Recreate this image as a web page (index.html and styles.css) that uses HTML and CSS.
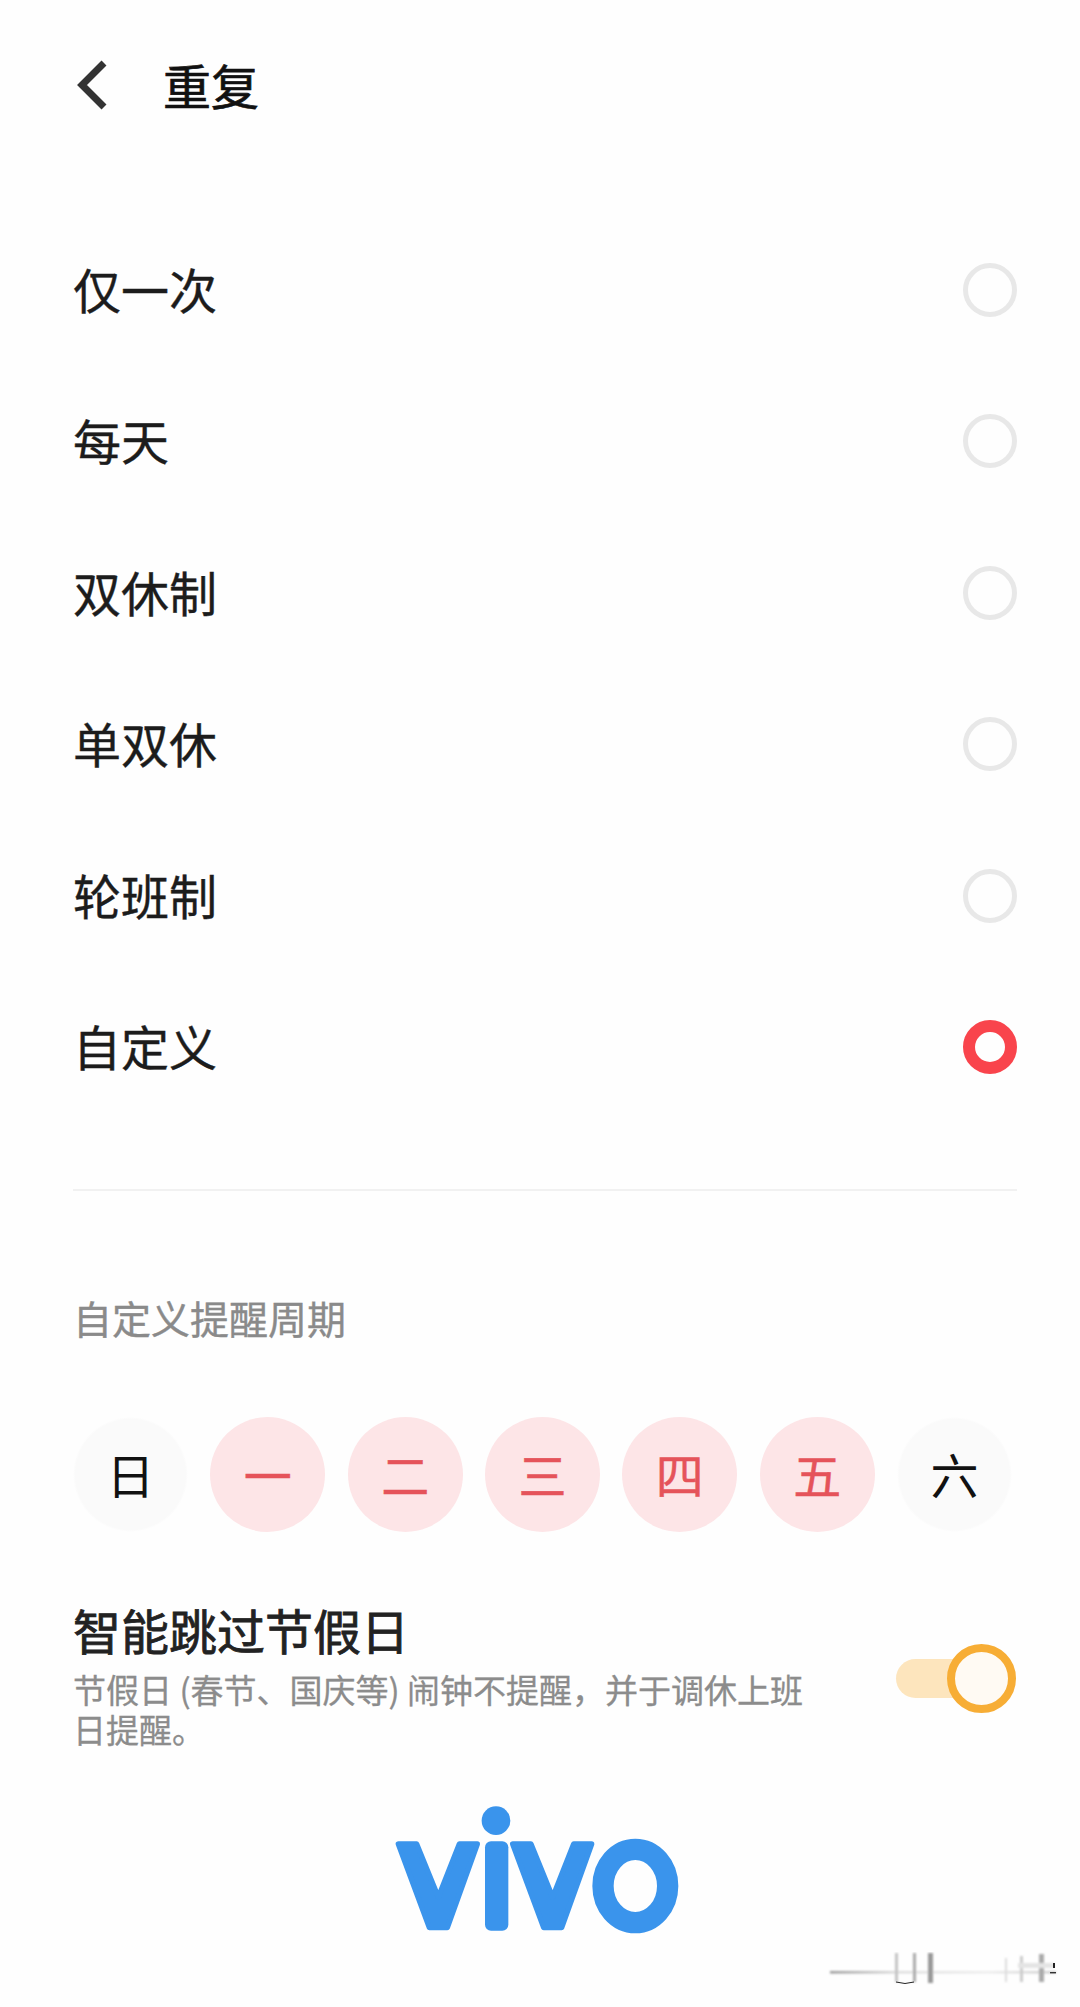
FILE: index.html
```html
<!DOCTYPE html>
<html lang="zh-CN">
  <head>
    <meta charset="UTF-8">
    <meta name="viewport" content="width=device-width, initial-scale=1" />
    <title>重复</title>
    <link rel="stylesheet" href="styles.css">
  </head>
  <body>
    <div class="page">
      <header class="header">
        <svg class="back" viewBox="0 0 32 50" aria-hidden="true">
          <polyline points="28,3 6,25 28,47" />
        </svg>
        <h1 class="title">重复</h1>
      </header>

      <ul class="options">
        <li class="option"><span class="option-name">仅一次</span><i class="radio"></i></li>
        <li class="option"><span class="option-name">每天</span><i class="radio"></i></li>
        <li class="option"><span class="option-name">双休制</span><i class="radio"></i></li>
        <li class="option"><span class="option-name">单双休</span><i class="radio"></i></li>
        <li class="option"><span class="option-name">轮班制</span><i class="radio"></i></li>
        <li class="option"><span class="option-name">自定义</span><i class="radio radio-on"></i></li>
      </ul>

      <div class="divider"></div>

      <div class="section-label">自定义提醒周期</div>

      <div class="days">
        <div class="day">日</div>
        <div class="day day-on">一</div>
        <div class="day day-on">二</div>
        <div class="day day-on">三</div>
        <div class="day day-on">四</div>
        <div class="day day-on">五</div>
        <div class="day">六</div>
      </div>

      <div class="holiday">
        <div class="holiday-text">
          <div class="holiday-title">智能跳过节假日</div>
          <div class="holiday-desc">节假日 (春节、国庆等) 闹钟不提醒&#65292;并于调休上班日提醒。</div>
        </div>
        <div class="switch"><div class="switch-knob"></div></div>
      </div>

      <svg class="logo" viewBox="0 0 990 510" role="img" aria-label="vivo">
        <circle cx="378" cy="122" r="43" />
        <polygon class="logo-v" points="85,192 140,192 205,352 268,192 322,192 232,443 178,443" />
        <rect x="345" y="184" width="70" height="268" rx="18" />
        <polygon class="logo-v" points="428,192 483,192 548,352 611,192 665,192 575,443 521,443" />
        <ellipse class="logo-o" cx="796" cy="318" rx="97" ry="110" />
      </svg>

      <svg class="smudge" viewBox="0 0 240 40" aria-hidden="true">
        <defs>
          <filter id="soft"><feGaussianBlur stdDeviation="1.3" /></filter>
          <linearGradient id="fadeLine" x1="0" x2="1" y1="0" y2="0">
            <stop offset="0" stop-color="#999" />
            <stop offset="0.3" stop-color="#ddd" />
            <stop offset="0.7" stop-color="#eee" />
            <stop offset="1" stop-color="#ccc" />
          </linearGradient>
        </defs>
        <g filter="url(#soft)">
          <rect x="2" y="19" width="226" height="2.5" fill="url(#fadeLine)" />
          <rect x="67" y="1" width="3" height="29" fill="#c4c4c4" />
          <rect x="85" y="1" width="3" height="29" fill="#aaa" />
          <rect x="100" y="1" width="5" height="30" fill="#999" />
          <rect x="177" y="6" width="2" height="24" fill="#ddd" />
          <rect x="192" y="4" width="3" height="26" fill="#ccc" />
          <rect x="211" y="2" width="5" height="28" fill="#aaa" />
          <rect x="190" y="11" width="36" height="5" fill="#e4e4e4" />
        </g>
        <path d="M68 30q9 3 18 0" fill="none" stroke="#222" stroke-width="1" />
        <rect x="225" y="11" width="2" height="5" fill="#222" />
        <rect x="222" y="20" width="6" height="1.4" fill="#333" />
      </svg>
    </div>
  </body>
</html>
```

FILE: styles.css
```css
* { box-sizing: border-box; }
body {
  margin: 0;
  overflow: hidden;
  background: #fefefe;
  font-family: "Noto Sans CJK SC", "Noto Sans", sans-serif;
  color: #1c1c1c;
}
.page {
  position: relative;
  width: 1080px;
  height: 2007px;
  padding: 0 63px 0 73px;
  overflow: hidden;
}
.header {
  display: flex;
  align-items: center;
  height: 170px;
  margin-bottom: 44px;
}
.back {
  width: 32px;
  height: 50px;
  margin: 0 0 0 3px;
  flex: none;
}
.back polyline {
  fill: none;
  stroke: #333;
  stroke-width: 7;
}
.title {
  margin: 0 0 3px 55px;
  font-size: 48px;
  font-weight: 400;
  line-height: 60px;
  color: #111;
  -webkit-text-stroke: 0.7px #111;
}
.options {
  list-style: none;
  margin: 0;
  padding: 0;
}
.option {
  display: flex;
  align-items: center;
  justify-content: space-between;
  height: 151.5px;
  font-size: 48px;
}
.option-name {
  margin-bottom: 4px;
  -webkit-text-stroke: 0.4px #1c1c1c;
}
.radio {
  display: block;
  width: 54px;
  height: 54px;
  border: 5px solid #e8e8e8;
  border-radius: 50%;
}
.radio-on {
  border: 12px solid #f9444c;
}
.divider {
  height: 2px;
  margin-top: 66px;
  background: #f1f1f1;
}
.section-label {
  margin-top: 101px;
  font-size: 39px;
  line-height: 50px;
  color: #8a8a8a;
  -webkit-text-stroke: 0.4px #8a8a8a;
}
.days {
  display: flex;
  justify-content: space-between;
  margin: 75px 5px 0 0;
}
.day {
  display: flex;
  align-items: center;
  justify-content: center;
  width: 115px;
  height: 115px;
  padding-bottom: 4px;
  border-radius: 50%;
  font-size: 48px;
  color: #111;
  background: radial-gradient(circle closest-side, #fafafa 96%, transparent 100%);
}
.day-on {
  color: #e5535a;
  background: #fde5e7;
  -webkit-text-stroke: 0.5px #e5535a;
}
.holiday {
  display: flex;
  align-items: flex-start;
  justify-content: space-between;
  margin-top: 65px;
}
.holiday-text {
  width: 740px;
}
.holiday-title {
  font-size: 48px;
  font-weight: 400;
  line-height: 64px;
  color: #222;
  -webkit-text-stroke: 0.8px #222;
}
.holiday-desc {
  margin-top: 8px;
  font-size: 33px;
  line-height: 40px;
  color: #8c8c8c;
  -webkit-text-stroke: 0.3px #8c8c8c;
}
.switch {
  position: relative;
  width: 120px;
  height: 39px;
  margin: 62px 1px 0 0;
  border-radius: 20px 0 0 20px;
  background: linear-gradient(to right, #fde5bd 60px, transparent 60px);
}
.switch-knob {
  position: absolute;
  right: 0;
  top: -15px;
  width: 69px;
  height: 69px;
  border: 8px solid #f7ad35;
  border-radius: 50%;
  background: #fffaf3;
}
.logo {
  position: absolute;
  left: 370px;
  top: 1780px;
  width: 330px;
  height: 170px;
  fill: #3a94ec;
}
.logo-v {
  stroke: #3a94ec;
  stroke-width: 16;
  stroke-linejoin: round;
}
.logo-o {
  fill: none;
  stroke: #3a94ec;
  stroke-width: 64;
}
.smudge {
  position: absolute;
  left: 828px;
  top: 1952px;
  width: 240px;
  height: 40px;
}
```
